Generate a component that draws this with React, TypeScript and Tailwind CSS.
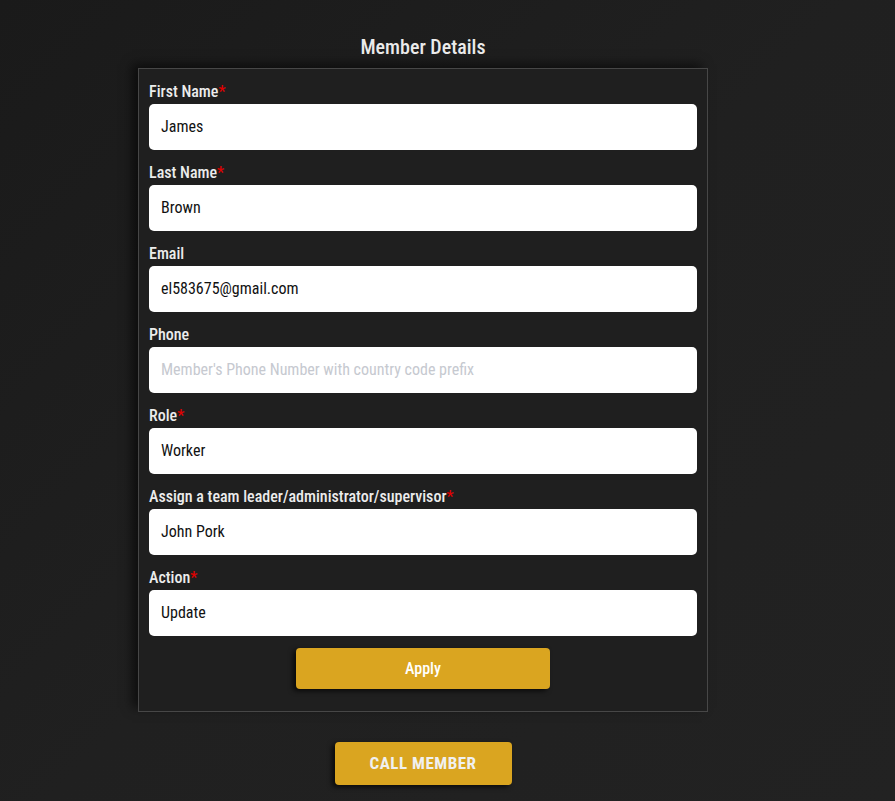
import React from "react";

const fields: { label: string; value: string; required: boolean; placeholder?: boolean }[] = [
  { label: "First Name", value: "James", required: true },
  { label: "Last Name", value: "Brown", required: true },
  { label: "Email", value: "el583675@gmail.com", required: false },
  { label: "Phone", value: "Member's Phone Number with country code prefix", required: false, placeholder: true },
  { label: "Role", value: "Worker", required: true },
  { label: "Assign a team leader/administrator/supervisor", value: "John Pork", required: true },
  { label: "Action", value: "Update", required: true },
];

export default function App() {
  return (
    <div
      className="min-h-[801px] w-full bg-[linear-gradient(135deg,#1a1a1a_0%,#202020_50%,#222222_100%)] font-['Roboto_Condensed','Roboto',sans-serif] font-stretch-condensed"
    >
      <div className="ml-[138px] w-[570px] pt-[35px] flex flex-col items-center">
        <h2 className="text-[20px] leading-[24px] font-medium text-[#ebebeb] mb-[9px]">Member Details</h2>
        <div className="w-full border border-[#474747] bg-[#1f1f1f] shadow-[-6px_-4px_10px_rgba(0,0,0,0.55)] px-[10px] pt-[13px] pb-[22px] flex flex-col">
          {fields.map((f, i) => (
            <div key={f.label} className={i === 0 ? "" : "mt-[13px]"}>
              <div className="text-[16px] leading-[20px] font-medium text-[#ececec] mb-[2px]">
                {f.label}
                {f.required && <span className="text-[#e00000]">*</span>}
              </div>
              <div className="h-[46px] bg-white rounded-[5px] flex items-center px-[12px] text-[16px]">
                <span className={f.placeholder ? "text-[#c6c9d0]" : "text-[#111]"}>{f.value}</span>
              </div>
            </div>
          ))}
          <div className="flex justify-center mt-[12px]">
            <button className="w-[254px] h-[41px] rounded-[4px] bg-[#daa520] text-white text-[16px] font-medium shadow-[-3px_2px_5px_rgba(0,0,0,0.7)]">
              Apply
            </button>
          </div>
        </div>
        <button className="mt-[30px] w-[177px] h-[43px] rounded-[4px] bg-[#daa520] text-[#f0f0f0] text-[17px] font-bold tracking-[0.03em] uppercase shadow-[-3px_2px_5px_rgba(0,0,0,0.7)]">
          Call Member
        </button>
      </div>
    </div>
  );
}
